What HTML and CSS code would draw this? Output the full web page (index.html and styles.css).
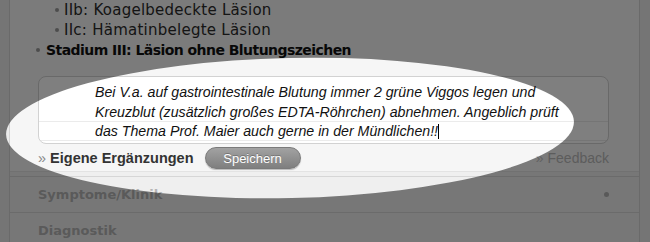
FILE: index.html
```html
<!DOCTYPE html>
<html lang="de">
<head>
    <meta charset="UTF-8">
    <meta name="viewport" content="width=device-width, initial-scale=1.0">
    <title>Eigene Ergänzungen</title>
    <link rel="stylesheet" href="styles.css">
</head>
<body>
    <div class="panel">
        <ul class="stages sub">
            <li>IIb: Koagelbedeckte Läsion</li>
            <li>IIc: Hämatinbelegte Läsion</li>
        </ul>
        <ul class="stages">
            <li class="strong">Stadium III: Läsion ohne Blutungszeichen</li>
        </ul>

        <div class="notes">
            <div class="note">Bei V.a. auf gastrointestinale Blutung immer 2 grüne Viggos legen und<br>Kreuzblut (zusätzlich großes EDTA-Röhrchen) abnehmen. Angeblich prüft<br>das Thema Prof. Maier auch gerne in der Mündlichen!!<span class="caret"></span></div>
            <div class="note-bar">
                <span class="note-label"><span class="raquo">»</span> Eigene Ergänzungen</span>
                <button class="save" type="button">Speichern</button>
                <a class="feedback" href="#"><span class="raquo">»</span> Feedback</a>
            </div>
        </div>

        <div class="sections">
            <div class="section">
                <span>Symptome/Klinik</span>
                <span class="dot"></span>
            </div>
            <div class="section">
                <span>Diagnostik</span>
            </div>
        </div>
    </div>

    <!-- spotlight over the notes field -->
    <div class="spotlight"></div>
</body>
</html>
```

FILE: styles.css
```css
html, body {
    margin: 0;
    height: 242px;
    overflow: hidden;
}
body {
    position: relative;
    background: #ebebeb;
    font-family: "DejaVu Sans", Verdana, sans-serif;
    color: #2a2a2a;
}
.panel {
    margin-left: 9px;
    width: 629px;
    background: #f6f6f6;
    border-left: 1px solid #d4d4d4;
    border-right: 1px solid #d4d4d4;
    min-height: 242px;
}

.stages {
    list-style: none;
    margin: 0;
    padding: 0 0 0 26px;
}
.stages li {
    display: flex;
    align-items: center;
    height: 20px;
    font-size: 15px;
    letter-spacing: 0.25px;
}
.stages li::before {
    content: "";
    width: 4px;
    height: 4px;
    border-radius: 50%;
    background: #9a9a9a;
    margin-right: 6px;
    flex: none;
}
.stages.sub {
    padding-left: 45px;
}
.stages.sub li::before {
    margin-right: 5px;
}
.stages li.strong {
    font-size: 14px;
    font-weight: bold;
    letter-spacing: -0.55px;
    color: #111;
}

.notes {
    padding: 16px 30px 2px 28px;
    border-bottom: 1px solid #e3e3e3;
}
.note {
    height: 60px;
    padding: 6px 10px 0 56px;
    border: 1px solid #d2d2d2;
    border-radius: 8px;
    background-color: #fff;
    background-image: repeating-linear-gradient(to bottom, transparent 0, transparent 18.5px, #ebebeb 18.5px, #ebebeb 19.5px);
    background-position: 0 6px;
    font-family: "Liberation Sans", Arial, sans-serif;
    font-style: italic;
    font-size: 14.2px;
    line-height: 19.5px;
    color: #111;
    white-space: nowrap;
}
.caret {
    display: inline-block;
    width: 1px;
    height: 15px;
    background: #000;
    vertical-align: -3px;
}
.note-bar {
    display: flex;
    align-items: center;
    height: 22px;
    margin-top: 3px;
    font-family: "Liberation Sans", Arial, sans-serif;
}
.note-label {
    font-size: 14.5px;
    font-weight: bold;
    color: #333;
}
.raquo {
    font-weight: normal;
    color: #888;
}
.save {
    margin-left: 11px;
    width: 96px;
    height: 22px;
    border: 1px solid #7a7a7a;
    border-radius: 11px;
    background: linear-gradient(#a2a2a2, #7f7f7f);
    box-shadow: 0 1px 1px rgba(0, 0, 0, 0.25);
    color: #fff;
    font-family: "Liberation Sans", Arial, sans-serif;
    font-size: 13px;
    text-shadow: 0 -1px 0 rgba(0, 0, 0, 0.25);
    padding: 0;
}
.feedback {
    margin-left: auto;
    font-size: 14px;
    color: #b9b9b9;
    text-decoration: none;
}
.feedback .raquo {
    color: #c4c4c4;
}

.sections {
    padding-top: 4px;
    background: #efefef;
}
.section {
    display: flex;
    align-items: center;
    justify-content: space-between;
    height: 35px;
    padding: 0 30px 0 28px;
    border-top: 1px solid #d6d6d6;
    font-size: 13px;
    font-weight: bold;
    color: #b4b4b4;
}
.dot {
    width: 5px;
    height: 5px;
    border-radius: 50%;
    background: #b2b2b2;
}

.spotlight {
    position: absolute;
    left: 6px;
    top: 58px;
    width: 568px;
    height: 140px;
    border-radius: 50%;
    transform: rotate(-1.3deg);
    box-shadow: 0 0 0 900px rgba(0, 0, 0, 0.5);
    pointer-events: none;
}
```
